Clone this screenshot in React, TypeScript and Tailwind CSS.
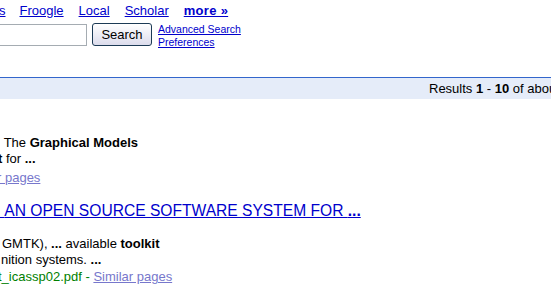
import React from 'react';

const link = 'text-[#0000cc] underline';

const App = () => {
  return (
    <div className="w-[551px] h-[294px] overflow-hidden bg-white font-['Liberation_Sans',Arial,sans-serif] text-[13px] leading-[15px] text-black">
      {/* Top tabs */}
      <div className="flex pt-[3px] h-[22px] whitespace-nowrap">
        <span className={`${link} -ml-[1px]`}>s</span>
        <span className={`${link} ml-[14px]`}>Froogle</span>
        <span className={`${link} ml-[15px]`}>Local</span>
        <span className={`${link} ml-[15px]`}>Scholar</span>
        <span className={`${link} ml-[15px] font-bold tracking-[0.3px]`}>more »</span>
      </div>

      {/* Search row */}
      <div className="flex items-start h-[55px]">
        <div className="-ml-[2px] mt-[2px] w-[89px] h-[22px] border border-[#a5acb2] bg-white" />
        <button className="ml-[5px] mt-[1px] w-[60px] h-[23px] rounded-[3px] border border-[#1c3a55] bg-gradient-to-b from-white to-[#dcdcec] text-[13px] text-black leading-none">
          Search
        </button>
        <div className="ml-[6px] flex flex-col text-[10.5px] leading-[12px]">
          <span className={`${link} mt-[1px]`}>Advanced Search</span>
          <span className={`${link} mt-[1px]`}>Preferences</span>
        </div>
      </div>

      {/* Results bar */}
      <div className="border-t border-[#3366cc] bg-[#e5ecf9] h-[22px] flex items-center whitespace-nowrap">
        <span className="ml-[429px]">
          Results <b>1</b> - <b>10</b> of about
        </span>
      </div>

      {/* Results */}
      <div className="mt-[36px] whitespace-nowrap leading-[16px]">
        <div>
          {'\u00a0'}The <b>Graphical Models</b>
        </div>
        <div className="-ml-[2px]">
          <b>t</b> for <b>...</b>
        </div>
        <div className="-ml-[3px] mt-[3px]">
          <span className="text-[#7777cc] underline">r pages</span>
        </div>
      </div>

      <div className="mt-[15px] whitespace-nowrap">
        <div className="text-[15.6px] leading-[19px]">
          <span className={link}>{'\u00a0'}AN OPEN SOURCE SOFTWARE SYSTEM FOR <b>...</b></span>
        </div>
        <div className="mt-[16px] leading-[16px]">
          <div className="ml-[2px]">
            GMTK), <b>...</b> available <b>toolkit</b>
          </div>
          <div className="ml-[1px]">
            nition systems. <b>...</b>
          </div>
          <div className="-ml-[2px] mt-[1px]">
            <span className="text-[#008000]">t_icassp02.pdf - </span>
            <span className="text-[#7777cc] underline">Similar pages</span>
          </div>
        </div>
      </div>
    </div>
  );
};

export default App;
